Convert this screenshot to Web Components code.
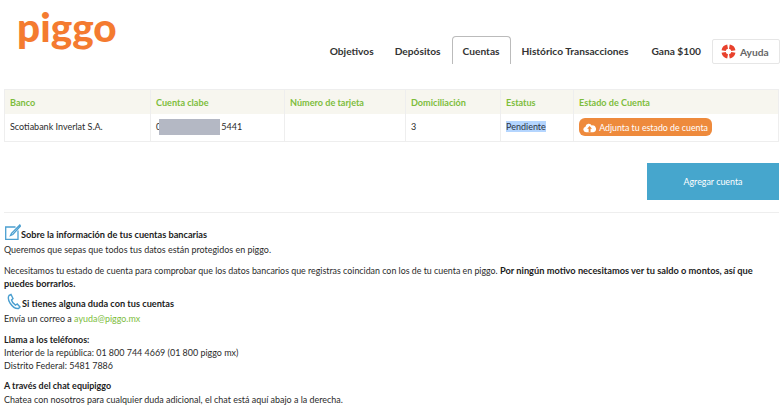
<!DOCTYPE html>
<html lang="es">
<head>
<meta charset="utf-8">
<title>piggo</title>
<style>
  html, body { margin: 0; padding: 0; background: #fff; }
  body { font-family: Lato, "Noto Sans", sans-serif; color: #2b2b2b; }
</style>
</head>
<body>
<piggo-header></piggo-header>
<cuentas-tabla></cuentas-tabla>
<agregar-cuenta></agregar-cuenta>
<info-cuentas></info-cuentas>

<script>
class PiggoTab extends HTMLElement {
  constructor() {
    super();
    this.attachShadow({ mode: "open" });
  }
  connectedCallback() {
    this.shadowRoot.innerHTML = `
      <style>
        :host { display: block; box-sizing: border-box; height: 28px; padding: 0 10px; border: 1px solid transparent; border-bottom: 0; border-radius: 4px 4px 0 0; font: 700 10.2px/28px Lato, sans-serif; color: #333; white-space: nowrap; }
        :host([active]) { border-color: #bbb; }
      </style>
      <slot></slot>`;
  }
}
customElements.define("piggo-tab", PiggoTab);

class PiggoHeader extends HTMLElement {
  constructor() {
    super();
    this.attachShadow({ mode: "open" });
  }
  connectedCallback() {
    this.shadowRoot.innerHTML = `
      <style>
        :host { display: flex; justify-content: space-between; align-items: flex-start; height: 89px; box-sizing: border-box; padding: 0 3px 0 17px; }
        .logo { font: 900 40.5px/50px Lato, sans-serif; color: #f47b30; margin-top: 2px; }
        nav { display: flex; align-items: flex-end; height: 64px; }
        .ayuda { display: flex; align-items: center; gap: 4px; box-sizing: border-box; width: 68px; height: 25px; padding-left: 8px; border: 1px solid #e6e6e6; border-radius: 2px; font: 700 10.2px Lato, sans-serif; color: #666; }
      </style>
      <div class="logo">piggo</div>
      <nav>
        <piggo-tab>Objetivos</piggo-tab>
        <piggo-tab style="margin-left:-1px">Depósitos</piggo-tab>
        <piggo-tab active>Cuentas</piggo-tab>
        <piggo-tab>Histórico Transacciones</piggo-tab>
        <piggo-tab style="margin-left:1px">Gana $100</piggo-tab>
        <div class="ayuda">
          <svg width="15" height="15" viewBox="0 0 15 15" fill="none" stroke="#e8412c" stroke-width="4.200">
            <path d="M6.600 2.600A5 5 0 0 0 2.600 6.600"/>
            <path d="M8.400 2.600A5 5 0 0 1 12.400 6.600"/>
            <path d="M2.600 8.400A5 5 0 0 0 6.600 12.400"/>
            <path d="M12.400 8.400A5 5 0 0 1 8.400 12.400"/>
          </svg>
          Ayuda
        </div>
      </nav>`;
  }
}
customElements.define("piggo-header", PiggoHeader);

class PiggoBoton extends HTMLElement {
  constructor() {
    super();
    this.attachShadow({ mode: "open" });
  }
  connectedCallback() {
    this.shadowRoot.innerHTML = `
      <style>
        :host { display: inline-flex; align-items: center; gap: 3px; box-sizing: border-box; width: 133px; height: 18px; padding: 0 4px; border-radius: 6px; background: #ee8a3c; color: #fff; font: 400 8.800px Lato, sans-serif; white-space: nowrap; }
      </style>
      <svg width="14" height="11" viewBox="0 0 14 11"><path fill="#fff" d="M3.200 10.500A3 3 0 0 1 2.600 4.600 3.600 3.600 0 0 1 9.300 3.300 3.600 3.600 0 0 1 11 10.500z"/><path fill="#ee8a3c" d="M7 3.800 4.400 6.800H6V10.500H8V6.800H9.600z"/></svg>
      <slot></slot>`;
  }
}
customElements.define("piggo-boton", PiggoBoton);

class CuentasTabla extends HTMLElement {
  constructor() {
    super();
    this.attachShadow({ mode: "open" });
  }
  connectedCallback() {
    this.shadowRoot.innerHTML = `
      <style>
        :host { display: block; margin: 0 4px; font: 400 9px Lato, sans-serif; color: #2b2b2b; }
        .grid { display: grid; grid-template-columns: 145px 134px 121px 95px 73px 1fr; grid-template-rows: 24px 27px; border: 1px solid #eee; box-sizing: border-box; height: 53px; }
        .grid > div { display: flex; align-items: center; padding: 0 0 2px 5px; border-left: 1px solid #eee; white-space: nowrap; }
        .grid > div:nth-child(6n+1) { border-left: 0; }
        .grid > .th { background: #f7f6ef; color: #7dbd3c; font-weight: 700; font-size: 9.100px; padding-bottom: 0; }
        .grid > .accion { padding-bottom: 1px; }
        .tapa { display: inline-block; width: 61px; height: 16px; margin: 0 1px 0 -2px; background: #b4b8c4; }
        mark { background: #b4d5fe; color: #2c3342; }
      </style>
      <div class="grid">
        <div class="th">Banco</div>
        <div class="th">Cuenta clabe</div>
        <div class="th">Número de tarjeta</div>
        <div class="th">Domiciliación</div>
        <div class="th">Estatus</div>
        <div class="th">Estado de Cuenta</div>
        <div>Scotiabank Inverlat S.A.</div>
        <div>0<span class="tapa"></span>5441</div>
        <div></div>
        <div>3</div>
        <div><mark>Pendiente</mark></div>
        <div class="accion"><piggo-boton>Adjunta tu estado de cuenta</piggo-boton></div>
      </div>`;
  }
}
customElements.define("cuentas-tabla", CuentasTabla);

class AgregarCuenta extends HTMLElement {
  constructor() {
    super();
    this.attachShadow({ mode: "open" });
  }
  connectedCallback() {
    this.shadowRoot.innerHTML = `
      <style>
        :host { display: flex; justify-content: flex-end; margin: 21px 4px 15px; padding-bottom: 12px; border-bottom: 1px solid #eee; }
        div { display: flex; align-items: center; justify-content: center; width: 132px; height: 37px; background: #46a6cd; color: #fff; font: 400 8.900px Lato, sans-serif; }
      </style>
      <div>Agregar cuenta</div>`;
  }
}
customElements.define("agregar-cuenta", AgregarCuenta);

class InfoCuentas extends HTMLElement {
  constructor() {
    super();
    this.attachShadow({ mode: "open" });
  }
  connectedCallback() {
    this.shadowRoot.innerHTML = `
      <style>
        :host { display: block; margin: 0 4px; font: 400 8.950px/13.4px Lato, sans-serif; color: #2b2b2b; }
        p { margin: 0 0 6.700px; }
        b { color: #1c1c1c; }
        a { color: #7dbd3c; text-decoration: none; }
        .titulo { display: flex; align-items: flex-end; font-size: 9.200px; font-weight: 700; color: #1c1c1c; margin: 0 0 2px; }
        .largo { font-size: 8.850px; }
        .largo b { font-size: 9.250px; }
        svg { flex: none; margin-top: -4px; }
      </style>
      <p class="titulo">
        <svg width="17" height="17" viewBox="0 0 17 17" fill="none" stroke="#4b9fd0" stroke-width="1.300"><path d="M11.500 3H1.700V15.300H14V6.500"/><path d="M15.800 1 7.500 9.300 6.500 11.500 8.800 10.500 16.500 2.200z"/></svg>
        Sobre la información de tus cuentas bancarias
      </p>
      <p>Queremos que sepas que todos tus datos están protegidos en piggo.</p>
      <p class="largo">Necesitamos tu estado de cuenta para comprobar que los datos bancarios que registras coincidan con los de tu cuenta en piggo. <b>Por ningún motivo necesitamos ver tu saldo o montos, así que</b><br><b>puedes borrarlos.</b></p>
      <p class="titulo">
        <svg width="14" height="17" style="margin:-4px 1px 0 3px" viewBox="0 0 14 17" fill="none" stroke="#4b9fd0" stroke-width="1.400"><path d="M2 2.500 4 1.500 6 5.500 4.500 7C5 9 6.500 11 8.500 12.200L10.200 11 13 14 11.500 15.500C8 16 5 13 3 10 1.500 7.500.8 4.500 2 2.500z"/></svg>
        Si tienes alguna duda con tus cuentas
      </p>
      <p>Envía un correo a <a href="#">ayuda@piggo.mx</a></p>
      <p><b>Llama a los teléfonos:</b><br>Interior de la república: 01 800 744 4669 (01 800 piggo mx)<br>Distrito Federal: 5481 7886</p>
      <p><b>A través del chat equipiggo</b><br>Chatea con nosotros para cualquier duda adicional, el chat está aquí abajo a la derecha.</p>`;
  }
}
customElements.define("info-cuentas", InfoCuentas);
</script>
</body>
</html>
